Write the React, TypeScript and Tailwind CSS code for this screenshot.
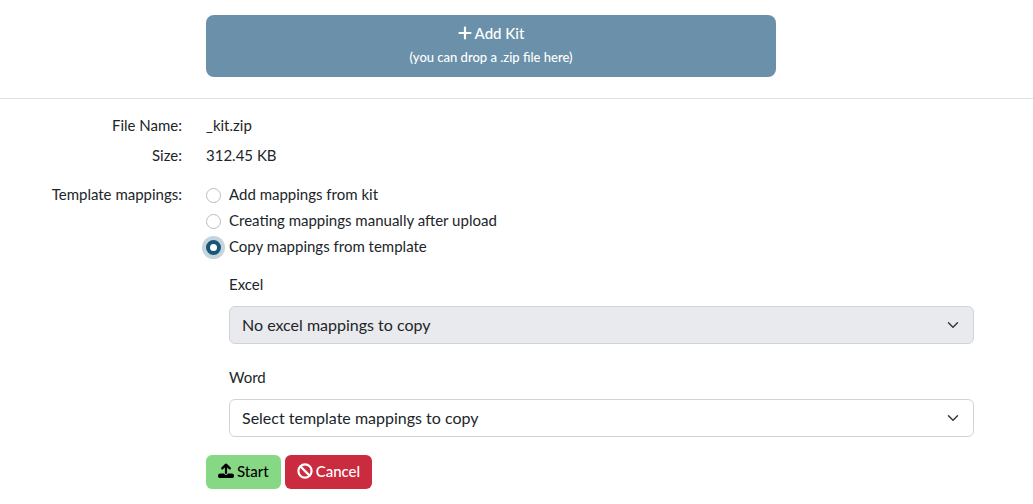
import { useState } from 'react';

const mappingOptions = [
  { value: 'kit', label: 'Add mappings from kit' },
  { value: 'manual', label: 'Creating mappings manually after upload' },
  { value: 'template', label: 'Copy mappings from template' },
];

function PlusIcon() {
  return (
    <svg className="w-3.5 h-3.5" viewBox="0 0 14 14" fill="none" aria-hidden="true">
      <path d="M7 1.5v11M1.5 7h11" stroke="currentColor" strokeWidth="2.2" strokeLinecap="round" />
    </svg>
  );
}

function UploadIcon() {
  return (
    <svg className="w-4 h-4" viewBox="0 0 16 16" fill="none" aria-hidden="true">
      <path d="M8 10V2M4.2 5.4L8 1.6l3.8 3.8" stroke="currentColor" strokeWidth="2.2" strokeLinecap="round" strokeLinejoin="round" />
      <path
        d="M2.2 10.5h3.9a2 2 0 0 0 3.8 0h3.9A2.2 2.2 0 0 1 16 12.7v.6a1.7 1.7 0 0 1-1.7 1.7H1.7A1.7 1.7 0 0 1 0 13.3v-.6a2.2 2.2 0 0 1 2.2-2.2z"
        fill="currentColor"
      />
    </svg>
  );
}

function BanIcon() {
  return (
    <svg className="w-4 h-4" viewBox="0 0 16 16" fill="none" aria-hidden="true">
      <circle cx="8" cy="8" r="6.6" stroke="currentColor" strokeWidth="2.2" />
      <path d="M3.4 3.4l9.2 9.2" stroke="currentColor" strokeWidth="2.2" />
    </svg>
  );
}

interface MappingSelectProps {
  id: string;
  label: string;
  placeholder: string;
  disabled?: boolean;
}

function MappingSelect({ id, label, placeholder, disabled }: MappingSelectProps) {
  return (
    <div>
      <label className="block mb-2.5 leading-6" htmlFor={id}>
        {label}
      </label>
      <div className="grid items-center">
        <select
          id={id}
          disabled={disabled}
          className="col-start-1 row-start-1 w-full h-[38px] pl-3 pr-9 text-base text-[#212529] appearance-none rounded-md border border-[#ced4da] bg-white disabled:bg-[#e9eaed] disabled:opacity-100"
        >
          <option>{placeholder}</option>
        </select>
        <svg
          className="col-start-1 row-start-1 justify-self-end mr-[15px] w-3 h-3 pointer-events-none"
          viewBox="0 0 16 16"
          fill="none"
          aria-hidden="true"
        >
          <path d="M2 5l6 6 6-6" stroke="#343a40" strokeWidth="2" strokeLinecap="round" strokeLinejoin="round" />
        </svg>
      </div>
    </div>
  );
}

export default function App() {
  const [mapping, setMapping] = useState('template');

  return (
    <div className="min-h-screen bg-white text-[15px] text-[#212529] font-['Lato',sans-serif]">
      <div className="pt-[15px] pb-[21px] pl-[206px] pr-[59px] border-b border-[#dee2e6]">
        <button
          type="button"
          className="flex flex-col items-center w-full max-w-[570px] h-[62px] pt-1.5 rounded-lg bg-[#6a91a9] text-white font-medium"
        >
          <span className="flex items-center gap-[3px] leading-6">
            <PlusIcon />
            Add Kit
          </span>
          <span className="text-[13px] leading-6">(you can drop a .zip file here)</span>
        </button>
      </div>

      <form className="pt-3.5 pr-[59px]" onSubmit={(e) => e.preventDefault()}>
        <dl className="grid grid-cols-[182px_1fr] gap-x-6 gap-y-1.5 leading-6">
          <dt className="text-right">File Name:</dt>
          <dd>_kit.zip</dd>
          <dt className="text-right">Size:</dt>
          <dd>312.45 KB</dd>
        </dl>

        <div className="grid grid-cols-[182px_1fr] gap-x-6 mt-[15px]" role="radiogroup" aria-labelledby="mappings-label">
          <div id="mappings-label" className="text-right leading-6">
            Template mappings:
          </div>
          <div>
            {mappingOptions.map((option) => (
              <label key={option.value} className="flex items-start gap-2 mb-0.5 leading-6">
                <input
                  type="radio"
                  name="mapping"
                  value={option.value}
                  checked={mapping === option.value}
                  onChange={() => setMapping(option.value)}
                  className="mt-1.5 appearance-none w-[15px] h-[15px] rounded-full border border-[#b9bdc1] bg-white outline-none checked:border-4 checked:border-[#175676] checked:ring-4 checked:ring-[#c5d5e0]"
                />
                {option.label}
              </label>
            ))}

            <div className="flex flex-col gap-[21px] mt-3.5 ml-[23px]">
              <MappingSelect id="excel" label="Excel" placeholder="No excel mappings to copy" disabled />
              <MappingSelect id="word" label="Word" placeholder="Select template mappings to copy" />
            </div>

            <div className="flex gap-1 mt-[18px]">
              <button type="submit" className="flex items-center gap-[3px] h-[34px] px-3 pb-0.5 rounded-md bg-[#87d884] text-black font-medium">
                <UploadIcon />
                Start
              </button>
              <button type="button" className="flex items-center gap-[3px] h-[34px] px-3 pb-0.5 rounded-md bg-[#cb2b3e] text-white font-medium">
                <BanIcon />
                Cancel
              </button>
            </div>
          </div>
        </div>
      </form>
    </div>
  );
}
